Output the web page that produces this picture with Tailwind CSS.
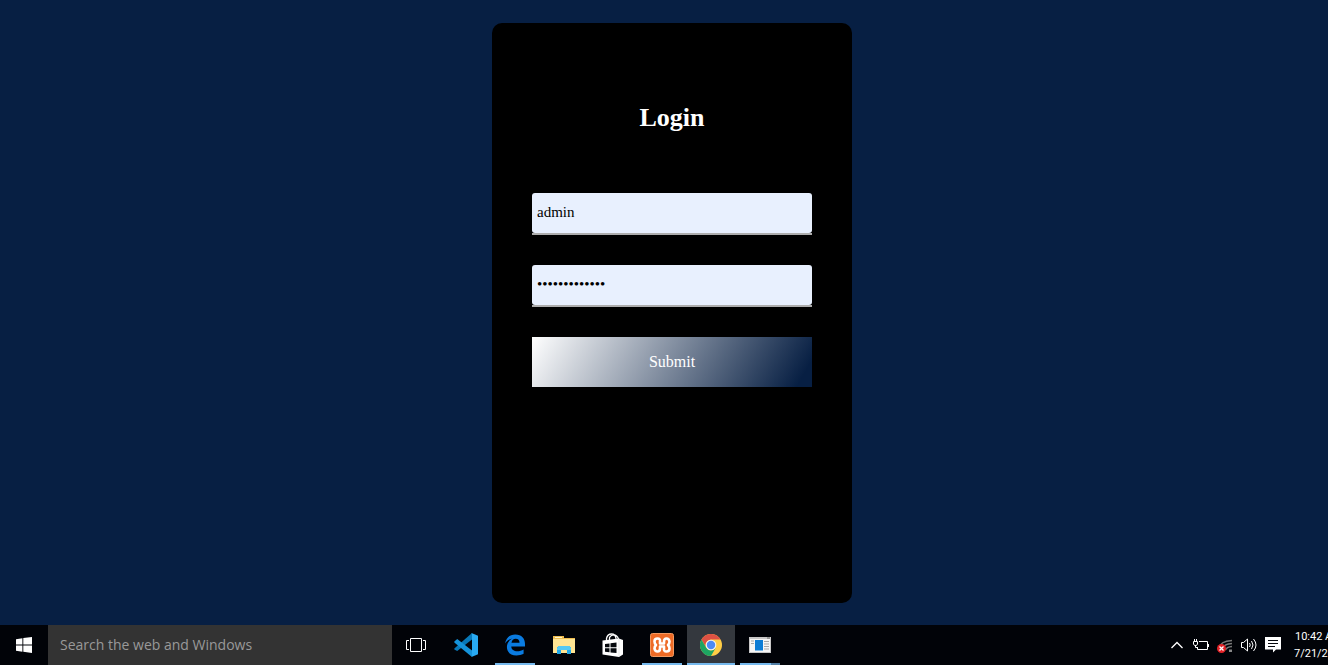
<!DOCTYPE html>
<html lang="en">
<head>
<meta charset="utf-8">
<meta name="viewport" content="width=device-width, initial-scale=1">
<title>Login</title>
<script src="https://cdn.jsdelivr.net/npm/@tailwindcss/browser@4"></script>
</head>
<body class="flex h-screen flex-col overflow-hidden bg-[#071f43]">
<main class="flex min-h-0 flex-1 items-center justify-center pt-px pl-4 font-['Liberation_Serif',serif]">
  <form class="flex h-[580px] w-[360px] flex-col rounded-[10px] bg-black px-10 pt-20" onsubmit="return false">
    <h1 class="text-center text-[26px] leading-[30px] font-bold text-white">Login</h1>
    <div class="mt-[60px] border-b-2 border-[#adadad]">
      <input aria-label="Username" type="text" value="admin" class="block h-10 w-full rounded-[3px] bg-[#e8f0fe] px-[5px] pb-0.5 text-[15px] text-black outline-none">
    </div>
    <div class="mt-[30px] border-b-2 border-[#adadad]">
      <input aria-label="Password" type="password" value="adminpassword" class="block h-10 w-full rounded-[3px] bg-[#e8f0fe] px-[5px] pb-0.5 text-[15px] text-black outline-none">
    </div>
    <button type="submit" class="mt-[30px] h-[50px] w-full bg-[linear-gradient(120deg,#ffffff,#071f43_95%)] text-base text-white">Submit</button>
  </form>
</main>
<footer class="flex h-10 shrink-0 bg-[#010308] font-['Open_Sans',sans-serif] text-white">
  <button aria-label="Start" class="flex w-12 shrink-0 items-center justify-center">
    <svg class="size-4" viewBox="0 0 16 16" fill="#fff"><path d="M0 2.2 6.4 1.3V7.5H0zM7.3 1.1 16 0V7.5H7.3zM0 8.4H6.4V14.7L0 13.8zM7.3 8.4H16V16L7.3 14.8z"/></svg>
  </button>
  <input aria-label="Search the web and Windows" type="text" placeholder="Search the web and Windows" class="w-[344px] shrink-0 bg-[#333333] px-3 text-sm text-white outline-none placeholder:text-[#999999]">
  <nav aria-label="Taskbar" class="flex shrink-0 gap-px">
    <button aria-label="Task view" class="mr-px flex w-12 items-center justify-center">
      <svg class="h-4 w-5" viewBox="0 0 20 16" fill="none" stroke="#fff"><path d="M4.5 1.500H15.500V14.500H4.500zM3 3.500H.5V12.500H3M17 3.500H19.500V12.500H17"/></svg>
    </button>
    <button aria-label="Visual Studio Code" class="flex w-12 items-center justify-center">
      <svg class="size-6" viewBox="0 0 24 24"><path d="M18 0v6.500L3.200 18 .3 16.500v-1z" fill="#0878b8"/><path d="M.3 8.500 3.200 6 18 17.500V24L.3 9.500z" fill="#1593da"/><path d="M17.500 0 24 2.800V21.200L17.500 24Q18 23.500 18 22.500V1.500z" fill="#29aaf2"/></svg>
    </button>
    <button aria-label="Edge" class="relative flex w-12 items-center justify-center">
      <svg class="size-6" viewBox="0 0 24 24"><path d="M2 10.600C3.200 4.300 7 1.500 12.300 1.500 18.700 1.500 22 5.500 22 11v2.500H8.300c.2 3.300 2.700 4.700 6 4.700 2.300 0 4.400-.6 6.300-1.800v4.400c-2.100 1.200-4.600 1.700-7.200 1.700-5.800 0-9.500-3.400-9.500-8.400 0-3.900 2-6.800 5.500-8.500C5.900 6.200 3.600 7.900 2 10.600zM8.500 9.800h8c0-2.600-1.300-4.100-3.800-4.100-2.300 0-3.800 1.500-4.200 4.100z" fill="#0a7be0"/></svg>
      <span class="absolute inset-x-1 bottom-0 h-0.5 bg-[#76b9ed]"></span>
    </button>
    <button aria-label="File Explorer" class="flex w-12 items-center justify-center">
      <svg class="h-5 w-[22px]" viewBox="0 0 22 20"><path d="M0 1h11v2h11v14H0z" fill="#eebd50"/><path d="M2 2h7v1H2z" fill="#fff7ce"/><path d="M0 4h22v14H0z" fill="#ffe593"/><path d="M4 19V12.500L6 11h10l2 1.500V19h-4V15H8v4z" fill="#20a8e8"/><path d="M4 13 6 11h10l2 2v2H4z" fill="#54c9f4"/></svg>
    </button>
    <button aria-label="Store" class="flex w-12 items-center justify-center">
      <svg class="size-6" viewBox="0 0 24 24"><path d="M1.500 7.500 18 5.500 22 7V21.500L18 24 1.500 21.500z" fill="#fff"/><path d="M18 6v17.500" stroke="#d5d5d5" stroke-width=".5"/><path d="M5.500 8V5.500Q6.500 1 10.500 1T15 5.500V7M8.500 8V4.500Q10 1.800 13 1.800T17.500 6" fill="none" stroke="#fff" stroke-width="1.300"/><path d="M4 10.900 8.500 10.400V14.200H4zM9.500 10.300 15.500 9.600V14.200h-6zM4 15.200H8.500v4L4 18.700zM9.500 15.200h6v4.900l-6-.7z" fill="#05080d"/></svg>
    </button>
    <button aria-label="XAMPP" class="relative flex w-12 items-center justify-center">
      <svg class="size-6" viewBox="0 0 24 24"><rect x=".5" y=".5" width="23" height="23" rx="2" fill="#ee6b26" stroke="#f39a61"/><path d="M12 10.500H14V8.500Q14 5.500 16.500 5.500T19.500 8.500Q19.500 10.500 18 12Q19.500 13.500 19.500 15.500Q19.500 18.500 16.500 18.500T14 15.500V13.500H10V15.500Q10 18.500 7.500 18.500T4.500 15.500Q4.500 13.500 6 12Q4.500 10.500 4.500 8.500Q4.500 5.500 7.500 5.500T10 8.500V10.500z" fill="none" stroke="#fff" stroke-width="2.600" stroke-linejoin="round"/></svg>
      <span class="absolute inset-x-1 bottom-0 h-0.5 bg-[#76b9ed]"></span>
    </button>
    <button aria-label="Chrome" class="relative flex w-12 items-center justify-center bg-[#34383e]">
      <svg class="size-[22px]" viewBox="0 0 24 24"><circle cx="12" cy="12" r="12" fill="#ffcd46"/><path d="M1.600 6A12 12 0 0 1 22.400 6H12A6 6 0 0 0 6.800 15z" fill="#dd5144"/><path d="M1.600 6 6.800 15A6 6 0 0 0 17.200 15L12 24A12 12 0 0 1 1.600 6z" fill="#1da462"/><circle cx="12" cy="12" r="5.800" fill="#f4f4f4"/><circle cx="12" cy="12" r="4.600" fill="#4c8bf5"/></svg>
      <span class="absolute inset-x-0 bottom-0 h-0.5 bg-[#76b9ed]"></span>
    </button>
    <button aria-label="Application" class="relative flex w-12 items-center justify-center">
      <svg class="h-4 w-[22px]" viewBox="0 0 22 16"><path d="M0 0h22v16H0z" fill="#c8c8c8"/><path d="M1 2h20v13H1z" fill="#f6f6f6"/><path d="M6 3h8v10.500H6z" fill="#0c7cd5"/><path d="M2 4h3M2 6.500h3M15 4.500h5M15 7h5M15 9.500h5M15 12h5" stroke="#a7a7a7"/><path d="M18 1h3" stroke="#666"/></svg>
      <span class="absolute inset-x-1 bottom-0 flex h-0.5"><span class="flex-1 bg-[#76b9ed]"></span><span class="w-[9px] bg-[#527fa5]"></span></span>
    </button>
  </nav>
  <div class="ml-auto flex shrink-0 items-center gap-2">
    <button aria-label="Show hidden icons" class="mr-0.5"><svg class="h-4 w-3" viewBox="0 0 12 16" fill="none" stroke="#fff" stroke-width="1.300"><path d="M.5 11 6 5.500 11.500 11"/></svg></button>
    <button aria-label="Battery"><svg class="size-4" viewBox="0 0 16 16" fill="none" stroke="#fff"><path d="M6 4.500H14.500V12.500H4.500V10M15.500 7v3M1.500 2v2M3.500 2v2M.5 4.500H4.500V7L3.500 8.500H1.500L.5 7zM2.500 8.500V10.500H4.500"/></svg></button>
    <button aria-label="Network"><svg class="size-4" viewBox="0 0 16 16"><path d="M2 11.500Q3 4 15 3.500M6 11Q7 7 15 6.500M8.500 13Q9.500 10 15 9.500" fill="none" stroke="#777" stroke-width="1.300"/><path d="M12 12.500H15V15H12z" fill="#888"/><circle cx="4.500" cy="11.500" r="4.500" fill="#e32227"/><path d="m2.500 9.500 4 4m0-4-4 4" stroke="#fff" stroke-width="1.300"/></svg></button>
    <button aria-label="Volume"><svg class="size-4" viewBox="0 0 16 16" fill="none" stroke="#fff"><path d="M.5 5.500H2.500L6.500 2V14L2.500 10.500H.5zM8.500 6Q10 8 8.500 10M10.500 4Q13.500 8 10.500 12M12.500 2Q17.500 8 12.500 14"/></svg></button>
    <button aria-label="Notifications"><svg class="size-4" viewBox="0 0 16 16"><path d="M0 0h16v12.500h-5L8 15.500V12.500H0z" fill="#fff"/><path d="M3 3.500h10M3 6.500h10M3 9.500h7" stroke="#05080d"/></svg></button>
    <div class="ml-1 flex w-[35px] flex-col overflow-hidden font-['Roboto',sans-serif] text-[11px] leading-[17px] whitespace-nowrap"><span class="ml-0.5">10:42 AM</span><span class="ml-px">7/21/2022</span></div>
  </div>
</footer>
</body>
</html>
